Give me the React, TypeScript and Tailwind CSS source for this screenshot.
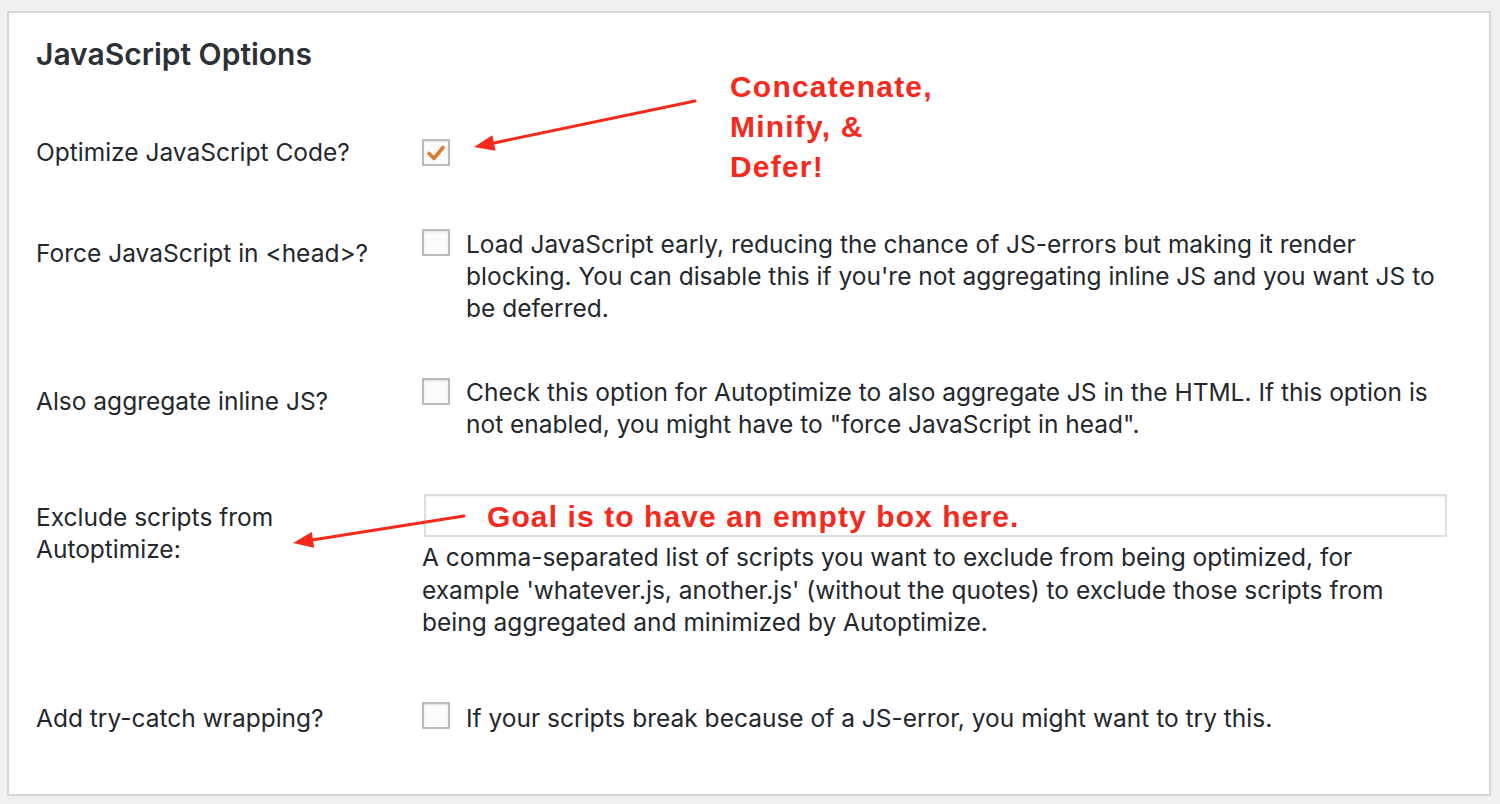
import React from 'react';

const body = "font-['Inter',sans-serif] text-[24.5px] text-[#23282d]";

function Checkbox({ checked = false }: { checked?: boolean }) {
  return (
    <span className="flex h-[27px] w-[28px] shrink-0 items-center justify-center border-2 border-[#b8bcc0] bg-[#fbfbfb] shadow-[inset_0_1px_2px_rgba(0,0,0,0.1)]">
      {checked && (
        <svg width="20" height="18" viewBox="0 0 20 18">
          <path d="M3 9.5 L8 14.5 L17 3.5" fill="none" stroke="#db7c2e" strokeWidth="3.6" strokeLinecap="round" strokeLinejoin="round" />
        </svg>
      )}
    </span>
  );
}

function Arrows() {
  return (
    <svg className="pointer-events-none absolute left-0 top-0" width="1500" height="804">
      {/* to the checkbox */}
      <line x1="695" y1="101" x2="494" y2="143" stroke="#f52a1d" strokeWidth="3" strokeLinecap="round" />
      <polygon points="474,147 495.6,150.8 492.4,135.2" fill="#f52a1d" />
      {/* to the exclude label */}
      <line x1="464" y1="516" x2="312" y2="540" stroke="#f52a1d" strokeWidth="3" strokeLinecap="round" />
      <polygon points="293,543 314.2,547.8 311.8,532.0" fill="#f52a1d" />
    </svg>
  );
}

export default function App() {
  return (
    <div className="relative h-[804px] w-[1500px] overflow-hidden bg-[#f1f1f1] pl-[7px] pt-[11px]">
      <div className="h-[785px] w-[1484px] border-2 border-[#d7d7d7] bg-white pl-[27px]">
        <h2 className="mt-[25px] h-[32px] font-['Inter',sans-serif] text-[30px] font-semibold leading-[32px] text-[#2c3136]">
          JavaScript Options
        </h2>

        <div className={`mt-[50px] flex flex-col leading-[32px] ${body}`}>
          {/* Optimize */}
          <div className="flex h-[90px]">
            <div className="w-[386px] pt-[16px]">Optimize JavaScript Code?</div>
            <div className="pt-[19px]">
              <Checkbox checked />
            </div>
          </div>

          {/* Force in head */}
          <div className="flex h-[130px]">
            <div className="w-[386px] pt-[27px]">Force JavaScript in &lt;head&gt;?</div>
            <div className="flex gap-[16px] pt-[18px]">
              <div className="mt-[1px]">
                <Checkbox />
              </div>
              <p className="whitespace-nowrap">
                Load JavaScript early, reducing the chance of JS-errors but making it render
                <br />
                blocking. You can disable this if you're not aggregating inline JS and you want JS to
                <br />
                be deferred.
              </p>
            </div>
          </div>

          {/* Inline JS */}
          <div className="flex h-[130px]">
            <div className="w-[386px] pt-[45px]">Also aggregate inline JS?</div>
            <div className="flex gap-[16px] pt-[36px]">
              <div className="mt-[2px]">
                <Checkbox />
              </div>
              <p className="whitespace-nowrap">
                Check this option for Autoptimize to also aggregate JS in the HTML. If this option is
                <br />
                not enabled, you might have to "force JavaScript in head".
              </p>
            </div>
          </div>

          {/* Exclude */}
          <div className="flex h-[190px]">
            <div className="w-[386px] pt-[31px]">
              Exclude scripts from
              <br />
              Autoptimize:
            </div>
            <div className="pt-[24px]">
              <div className="ml-[2px] h-[43px] w-[1023px] border-2 border-[#dedede] bg-white shadow-[inset_0_1px_2px_rgba(0,0,0,0.07)]" />
              <p className="mt-[4px] whitespace-nowrap leading-[32.5px]">
                A comma-separated list of scripts you want to exclude from being optimized, for
                <br />
                example 'whatever.js, another.js' (without the quotes) to exclude those scripts from
                <br />
                being aggregated and minimized by Autoptimize.
              </p>
            </div>
          </div>

          {/* Try-catch */}
          <div className="flex h-[120px]">
            <div className="w-[386px] pt-[42px]">Add try-catch wrapping?</div>
            <div className="flex gap-[16px] pt-[42px]">
              <Checkbox />
              <p className="whitespace-nowrap">If your scripts break because of a JS-error, you might want to try this.</p>
            </div>
          </div>
        </div>
      </div>

      <Arrows />

      <p className="absolute left-[730px] top-[67px] font-['Liberation_Sans',Arial,sans-serif] text-[30px] font-bold leading-[40px] tracking-[1.2px] text-[#f52a1d]">
        Concatenate,
        <br />
        Minify, &amp;
        <br />
        Defer!
      </p>
      <p className="absolute left-[487px] top-[497px] whitespace-nowrap font-['Liberation_Sans',Arial,sans-serif] text-[30px] font-bold leading-[40px] tracking-[1.1px] text-[#f52a1d]">
        Goal is to have an empty box here.
      </p>
    </div>
  );
}
